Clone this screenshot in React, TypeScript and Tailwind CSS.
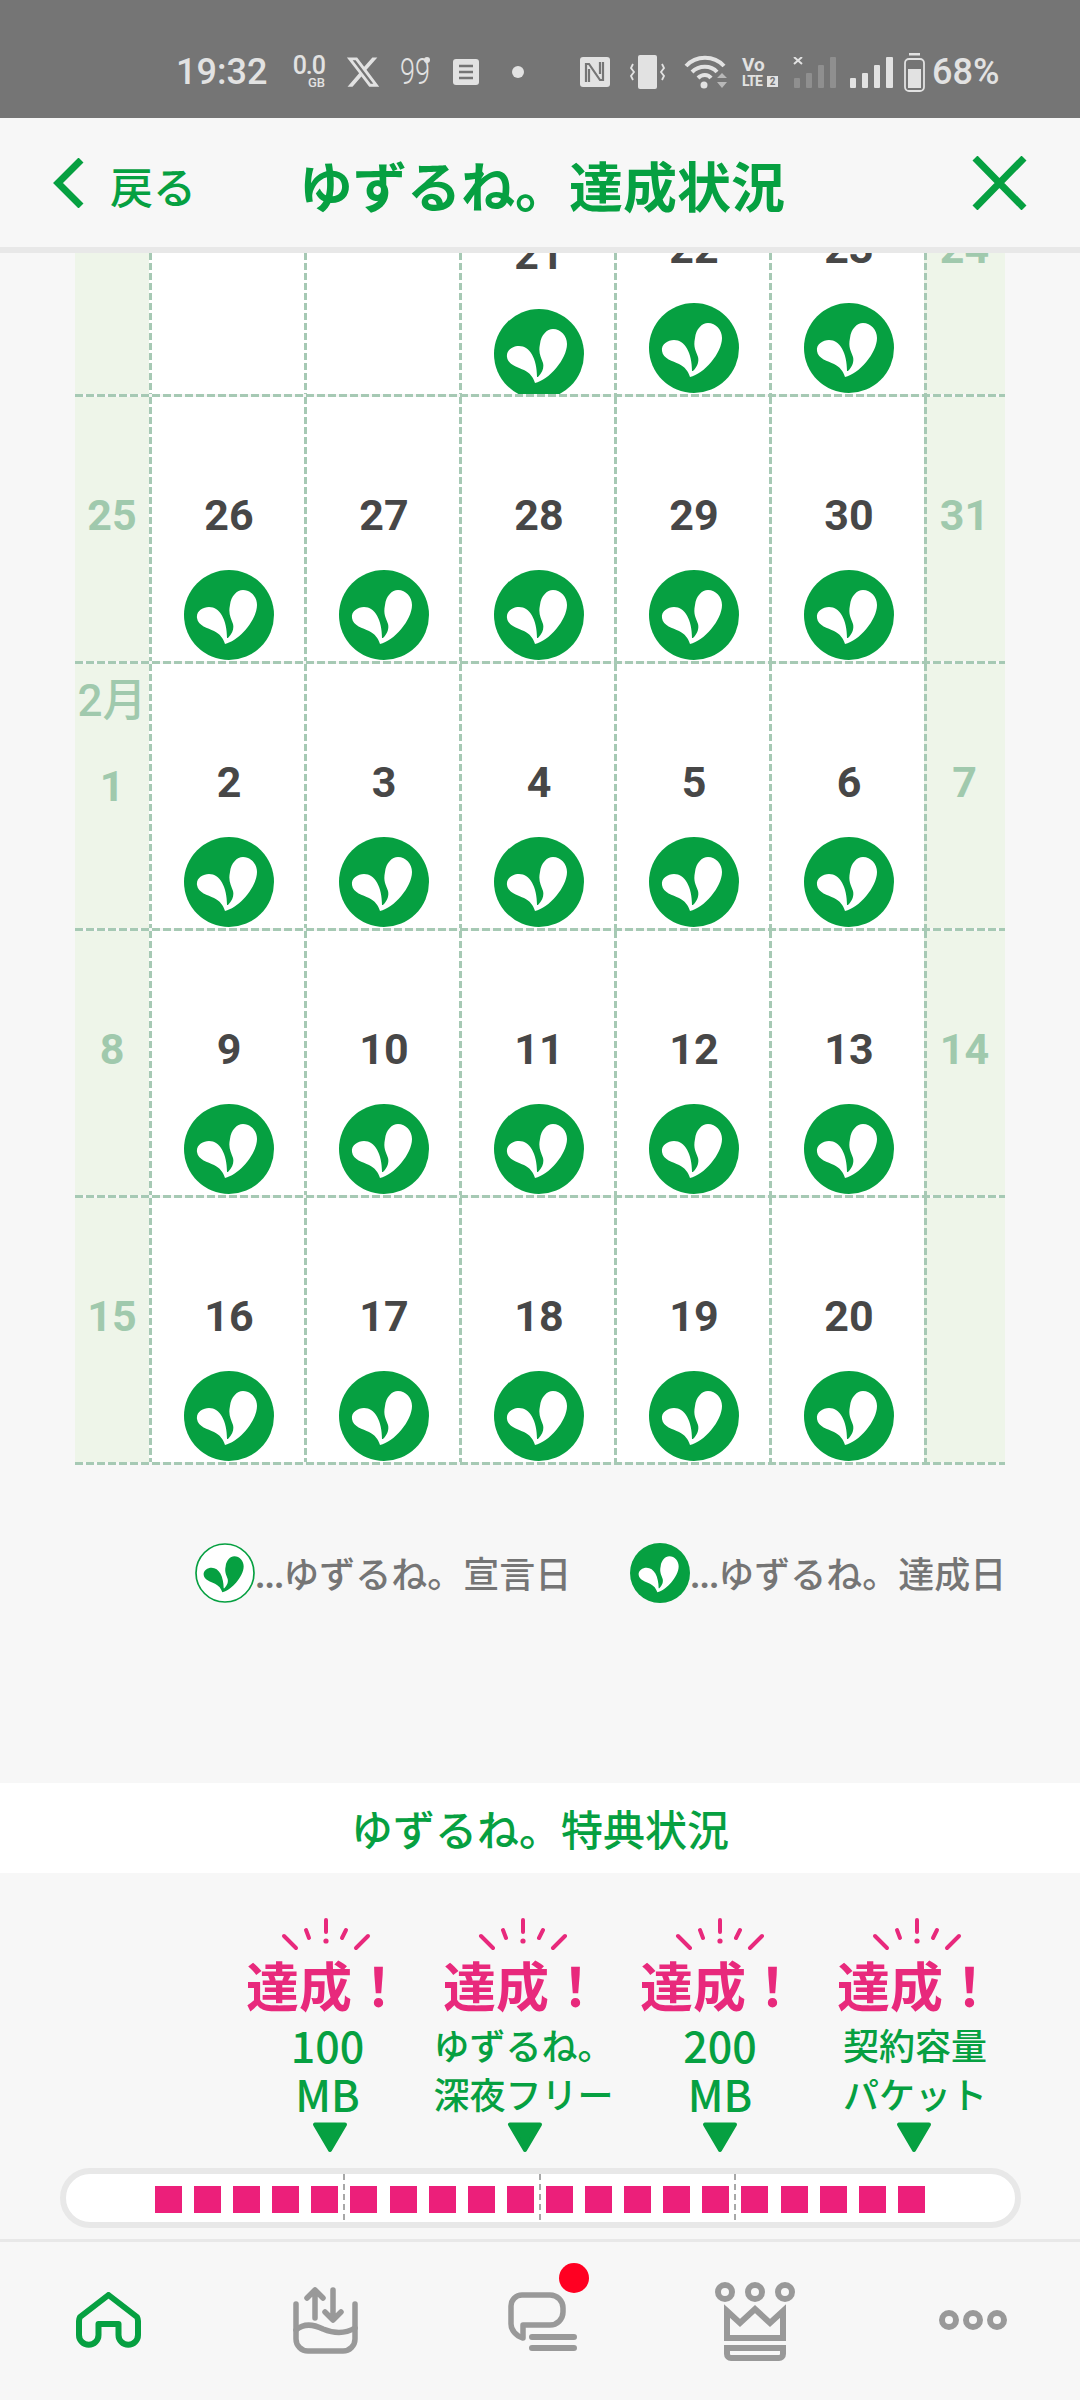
import { FaXTwitter } from "react-icons/fa6";

const HEART =
  "M41 74C39 68 36 64 30 61C24 58 14 56 13 48C12 41 19 37 25 37C36 37 43 50 43 68L44 68C49 63 50 58 49 54C47 48 44 44 46 35C47 26 53 20 59 20C67 20 73 27 73 35C73 50 55 71 41 74Z";

const DASH_V =
  "bg-[repeating-linear-gradient(to_bottom,#a6c9b4_0_7px,transparent_7px_10px)] bg-no-repeat bg-[length:3px_100%]";

const FIRST_WEEK: (number | null)[] = [null, null, 21, 22, 23];
const WEEKS = [
  { left: 25, days: [26, 27, 28, 29, 30], right: 31 },
  { left: 1, month: "2月", days: [2, 3, 4, 5, 6], right: 7 },
  { left: 8, days: [9, 10, 11, 12, 13], right: 14 },
  { left: 15, days: [16, 17, 18, 19, 20], right: null },
];

const AWARDS = [
  { lines: ["100", "MB"], labelClass: "ml-[4px]", arrowClass: "ml-[8px]" },
  { lines: ["ゆずるね。", "深夜フリー"], labelClass: "ml-[2px]", arrowClass: "ml-[4px]" },
  { lines: ["200", "MB"], labelClass: "ml-[1px]", arrowClass: "ml-[1px]" },
  { lines: ["契約容量", "パケット"], labelClass: "-ml-[3px]", arrowClass: "-ml-[6px]" },
];

function Heart({ outline = false, size = 90 }: { outline?: boolean; size?: number }) {
  return (
    <svg width={size} height={size} viewBox="0 0 90 90" className="block shrink-0">
      {outline ? (
        <>
          <circle cx="45" cy="45" r="43.5" fill="#fff" stroke="#06a041" strokeWidth="2.5" />
          <path d={HEART} fill="#06a041" />
        </>
      ) : (
        <>
          <circle cx="45" cy="45" r="45" fill="#06a041" />
          <path d={HEART} fill="#fff" />
        </>
      )}
    </svg>
  );
}

function StatusBar() {
  return (
    <div className="h-[118px] bg-[#757575] pt-[52px] shrink-0 text-[#e2e2e2]">
      <div className="flex items-center h-[40px] pl-[176px] font-['Roboto',sans-serif]">
        <span className="w-[92px] text-[36px] leading-none font-medium">19:32</span>

        <div className="ml-[28px] w-[29px] flex flex-col items-end">
          <span className="text-[25px] leading-[22px] font-medium tracking-[-1px]">0.0</span>
          <span className="text-[13px] leading-[12px] font-medium">GB</span>
        </div>

        <FaXTwitter className="ml-[20px] -mr-[2px] w-[36px] h-[36px]" />

        <div className="ml-[21px] w-[32px] relative h-[30px]">
          <span className="absolute left-0 top-0 text-[36px] leading-[30px] font-light origin-left scale-x-[.75]">99</span>
          <span className="absolute right-[2px] top-0 w-[6px] h-[6px] rounded-full bg-[#e2e2e2]" />
        </div>

        <svg width="26" height="26" viewBox="0 0 26 26" className="ml-[21px]">
          <rect width="26" height="26" rx="3" fill="#e2e2e2" />
          <path d="M6 7H20M6 13H20M6 19H20" stroke="#757575" strokeWidth="2.5" />
        </svg>

        <span className="ml-[33px] w-[12px] h-[12px] rounded-full bg-[#e2e2e2]" />

        <svg width="30" height="30" viewBox="0 0 30 30" className="ml-[56px]">
          <rect width="30" height="30" rx="3" fill="#e2e2e2" />
          <path d="M6 25V7H9L20 23H23V5M9 12V25M20 5V17" stroke="#757575" strokeWidth="2.2" fill="none" />
        </svg>

        <svg width="35" height="34" viewBox="0 0 35 34" className="ml-[20px]">
          <rect x="8" width="19" height="34" rx="2" fill="#e2e2e2" />
          <path d="M3 9L1 13L4 17L1 21L3 25M32 9L34 13L31 17L34 21L32 25" stroke="#e2e2e2" strokeWidth="1.8" fill="none" />
        </svg>

        <svg width="44" height="34" viewBox="0 0 44 34" className="ml-[19px]">
          <path d="M2 11C12 0 30 0 40 11M8 17C15 10 27 10 33 17M14 23C18 19 24 19 27 23" stroke="#e2e2e2" strokeWidth="4" fill="none" />
          <circle cx="20" cy="30" r="3.5" fill="#e2e2e2" />
          <path d="M33 23H43L38 18ZM33 27H43L38 33Z" fill="#b8b8b8" />
        </svg>

        <div className="ml-[14px] w-[36px] flex flex-col font-bold leading-none">
          <span className="text-[19px] h-[18px] leading-[16px]">Vo</span>
          <div className="flex items-center h-[12px]">
            <span className="text-[14px] tracking-[-0.8px] w-[25px]">LTE</span>
            <span className="w-[11px] h-[11px] bg-[#e2e2e2] text-[#757575] text-[10px] text-center leading-[11px]">2</span>
          </div>
        </div>

        <svg width="44" height="31" viewBox="0 0 44 31" className="ml-[15px]">
          <path d="M1 7L9 0M1 0L9 7" stroke="#e2e2e2" strokeWidth="2" />
          <g fill="#8f8f8f">
            <rect x="1" y="21" width="6" height="10" rx="1" />
            <rect x="13" y="16" width="6" height="15" rx="1" />
            <rect x="25" y="8" width="6" height="23" rx="1" />
            <rect x="37" y="0" width="6" height="31" rx="1" />
          </g>
        </svg>

        <svg width="43" height="31" viewBox="0 0 43 31" className="ml-[13px]">
          <g fill="#e2e2e2">
            <rect x="0" y="21" width="6" height="10" rx="1" />
            <rect x="12" y="16" width="6" height="15" rx="1" />
            <rect x="24" y="8" width="6" height="23" rx="1" />
            <rect x="36" y="0" width="7" height="31" rx="1" />
          </g>
        </svg>

        <svg width="21" height="39" viewBox="0 0 21 39" className="ml-[11px]">
          <rect x="5" width="11" height="2.5" fill="#e2e2e2" />
          <rect x="1" y="6" width="19" height="32" rx="4" fill="none" stroke="#e2e2e2" strokeWidth="1.8" />
          <rect x="4" y="16" width="13" height="19" fill="#e2e2e2" />
        </svg>

        <span className="ml-[7px] text-[36px] leading-none font-medium">68%</span>
      </div>
    </div>
  );
}

function Header() {
  return (
    <div className="h-[135px] shrink-0 bg-[#f7f7f7] border-b-[6px] border-[#e8e8e8] flex items-center pl-[53px] pr-[53px] text-[#06a041] font-['Noto_Sans_CJK_JP',sans-serif]">
      <svg width="31" height="50" viewBox="0 0 31 50" className="shrink-0">
        <path d="M28 2L5 25L28 48" stroke="#06a041" strokeWidth="7" fill="none" />
      </svg>
      <span className="ml-[26px] text-[43px] leading-none font-medium mt-[5px]">戻る</span>
      <h1 className="ml-[103px] text-[54px] leading-none font-bold mt-[5px] whitespace-nowrap">ゆずるね。達成状況</h1>
      <svg width="55" height="54" viewBox="0 0 55 54" className="ml-auto shrink-0">
        <path d="M3 2L52 52M52 2L3 52" stroke="#06a041" strokeWidth="7" fill="none" />
      </svg>
    </div>
  );
}

function DayCell({ day, low = false }: { day: number | null; low?: boolean }) {
  return (
    <div className={`w-[155px] h-full pl-[5px] bg-white flex flex-col items-center justify-end overflow-hidden ${DASH_V}`}>
      {day !== null && (
        <div className={`flex flex-col items-center ${low ? "-mb-[5px]" : "mb-[1px]"}`}>
          <span className="h-[50px] text-[43px] leading-[50px] font-bold text-[#474747]">{day}</span>
          <div className="mt-[30px]">
            <Heart />
          </div>
        </div>
      )}
    </div>
  );
}

function WeekendNum({ n, month }: { n: number | null; month?: string }) {
  return (
    <div className={`flex flex-col items-center ${month ? "mb-[117px]" : "mb-[121px]"}`}>
      {month && (
        <span className="h-[48px] mb-[36px] text-[44px] leading-[48px] font-medium whitespace-nowrap font-['Roboto','Noto_Sans_CJK_JP',sans-serif]">
          {month}
        </span>
      )}
      {n !== null && <span className="h-[50px] text-[43px] leading-[50px] font-bold">{n}</span>}
    </div>
  );
}

function HLine() {
  return (
    <div className="h-[3px] mx-[75px] w-[930px] bg-[repeating-linear-gradient(to_right,#a6c9b4_0_8px,transparent_8px_11px)]" />
  );
}

function Calendar() {
  return (
    <div className="shrink-0 font-['Roboto',sans-serif]">
      {/* first row is scrolled under the header */}
      <div className="h-[141px] mx-[75px] flex overflow-hidden text-[#a0c9ad]">
        <div className="w-[74px] h-full bg-[#eef5e9]" />
        {FIRST_WEEK.map((d, i) => (
          <DayCell key={i} day={d} low={d === 21} />
        ))}
        <div className={`w-[81px] h-full bg-[#eef5e9] flex flex-col items-center justify-end ${DASH_V}`}>
          <WeekendNum n={24} />
        </div>
      </div>
      <HLine />
      {WEEKS.map((w, i) => (
        <div key={i}>
          <div className="h-[264px] mx-[75px] flex overflow-hidden text-[#a0c9ad]">
            <div className="w-[74px] h-full bg-[#eef5e9] flex flex-col items-center justify-end">
              <WeekendNum n={w.left} month={w.month} />
            </div>
            {w.days.map((d) => (
              <DayCell key={d} day={d} />
            ))}
            <div className={`w-[81px] h-full bg-[#eef5e9] flex flex-col items-center justify-end ${DASH_V}`}>
              <WeekendNum n={w.right} />
            </div>
          </div>
          <HLine />
        </div>
      ))}
    </div>
  );
}

function Legend() {
  return (
    <div className="mt-[78px] h-[60px] pl-[195px] flex items-center text-[36px] leading-none font-medium text-[#757575] font-['Noto_Sans_CJK_JP',sans-serif] shrink-0">
      <Heart outline size={60} />
      <span className="w-[315px] pt-[2px] whitespace-nowrap">
        <span className="font-bold tracking-[-1px] font-['Roboto',sans-serif]">...</span>ゆずるね。宣言日
      </span>
      <div className="ml-[60px]">
        <Heart size={60} />
      </div>
      <span className="pt-[2px] whitespace-nowrap">
        <span className="font-bold tracking-[-1px] font-['Roboto',sans-serif]">...</span>ゆずるね。達成日
      </span>
    </div>
  );
}

function Sparkle() {
  return (
    <svg width="90" height="33" viewBox="0 0 90 33" className="block">
      <path
        d="M3 18L15 30M25 12L28 20M45 2V14M65 12L61 20M87 18L75 30"
        stroke="#e8297c"
        strokeWidth="4"
        strokeLinecap="round"
        fill="none"
      />
      <circle cx="45" cy="23" r="2.6" fill="#e8297c" />
    </svg>
  );
}

function Awards() {
  return (
    <div className="shrink-0 font-['Noto_Sans_CJK_JP',sans-serif]">
      <div className="mt-[180px] h-[90px] bg-white flex items-center justify-center text-[42px] leading-none font-medium text-[#06a041]">
        ゆずるね。特典状況
      </div>
      <div className="mt-[45px] pl-[227px] flex">
        {AWARDS.map((a, i) => (
          <div key={i} className="w-[197px] flex flex-col items-center">
            <Sparkle />
            <span className="mt-[3px] h-[60px] text-[53px] leading-[60px] font-bold text-[#e8297c] whitespace-nowrap">達成！</span>
            <div className={`mt-[6px] flex flex-col items-center font-medium text-[#06a041] whitespace-nowrap ${a.labelClass}`}>
              {a.lines.map((l) => (
                <span key={l} className={`h-[49px] leading-[49px] ${/\d|MB/.test(l) ? "text-[43px]" : "text-[36px]"}`}>
                  {l}
                </span>
              ))}
            </div>
            <svg width="36" height="31" viewBox="0 0 36 31" className={`block mt-[4px] ${a.arrowClass}`}>
              <path d="M3 2.5H33L18 28Z" fill="#06a041" stroke="#06a041" strokeWidth="4" strokeLinejoin="round" />
            </svg>
          </div>
        ))}
      </div>
      <div className="mt-[15px] ml-[60px] w-[961px] h-[60px] rounded-full border-[6px] border-[#e8e8e8] bg-white flex items-center gap-[12.1px] pl-[89px]">
        {[0, 1, 2, 3].map((g) => (
          <div key={g} className="relative h-full flex items-center gap-[12.1px]">
            {[0, 1, 2, 3, 4].map((s) => (
              <span key={s} className="w-[27px] h-[27px] mt-[3px] bg-[#ec1f7a]" />
            ))}
            {g < 3 && (
              <span className="absolute -right-[7px] top-0 bottom-0 w-[2px] bg-[repeating-linear-gradient(to_bottom,#a8a8a8_0_6px,transparent_6px_10px)]" />
            )}
          </div>
        ))}
      </div>
    </div>
  );
}

function BottomNav() {
  return (
    <div className="mt-[11px] flex-1 border-t-[3px] border-[#e8e8e8] bg-[#f7f7f7]">
      <div className="flex items-start pl-[76px] pt-[38px]">
        {/* home */}
        <svg width="65" height="56" viewBox="0 0 65 56" className="mt-[12px] shrink-0">
          <path
            d="M32.5 3L61 25Q62 27 62 29V43A9.75 9.75 0 0 1 42.5 43V32H22.5V43A9.75 9.75 0 0 1 3 43V29Q3 27 4 25Z"
            fill="none"
            stroke="#06a041"
            strokeWidth="6"
            strokeLinejoin="round"
          />
        </svg>
        {/* data charge */}
        <svg width="65" height="68" viewBox="0 0 65 68" className="ml-[152px] mt-[6px] shrink-0">
          <g fill="none" stroke="#999" strokeWidth="5.5" strokeLinecap="round" strokeLinejoin="round">
            <path d="M3 18V53A12 12 0 0 0 15 65H50A12 12 0 0 0 62 53V18" />
            <path d="M3 44C12 36 22 39 30 43C42 48 52 48 62 42" />
            <path d="M22 32V5M14 12L22 4L30 12" />
            <path d="M40 4V33M32 26L40 34L48 26" />
          </g>
        </svg>
        {/* chat */}
        <div className="ml-[150px] mt-[12px] relative shrink-0">
          <svg width="69" height="60" viewBox="0 0 69 60" className="block">
            <g fill="none" stroke="#999" strokeLinecap="round" strokeLinejoin="round">
              <path strokeWidth="5.5" d="M14 3H42A13 13 0 0 1 55 16V20A13 13 0 0 1 42 33H15V46C8 44 3 38 3 32V14A11 11 0 0 1 14 3Z" />
              <path strokeWidth="6" d="M24 45H66M24 56H66" />
            </g>
          </svg>
          <span className="absolute left-[51px] -top-[29px] w-[30px] h-[30px] rounded-full bg-[#ff0022]" />
        </div>
        {/* ranking */}
        <svg width="80" height="80" viewBox="0 0 80 80" className="ml-[138px] mt-[2px] shrink-0">
          <g fill="none" stroke="#999" strokeWidth="6">
            <circle cx="10" cy="10" r="7" />
            <circle cx="40" cy="10" r="7" />
            <circle cx="70" cy="10" r="7" />
            <path d="M12 29L25 41L40 27L55 41L68 29V56H12Z" />
            <path d="M12 66H68V72A4 4 0 0 1 64 76H16A4 4 0 0 1 12 72Z" />
          </g>
        </svg>
        {/* more */}
        <svg width="68" height="20" viewBox="0 0 68 20" className="ml-[144px] mt-[30px] shrink-0">
          <g fill="none" stroke="#999" strokeWidth="6">
            <circle cx="10" cy="10" r="7" />
            <circle cx="34" cy="10" r="7" />
            <circle cx="58" cy="10" r="7" />
          </g>
        </svg>
      </div>
    </div>
  );
}

export default function App() {
  return (
    <div className="w-[1080px] h-[2400px] bg-[#f7f7f7] flex flex-col overflow-hidden">
      <StatusBar />
      <Header />
      <Calendar />
      <Legend />
      <Awards />
      <BottomNav />
    </div>
  );
}
